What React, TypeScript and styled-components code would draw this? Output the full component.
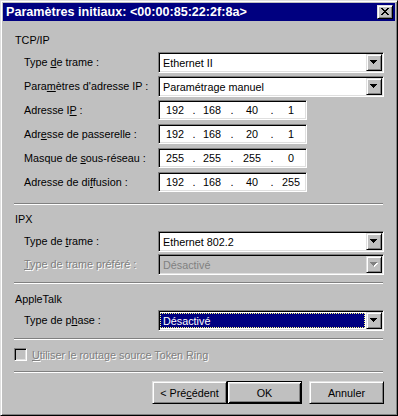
import React from 'react';
import styled, { createGlobalStyle, css } from 'styled-components';

const GlobalStyle = createGlobalStyle`
    html, body {
        margin: 0;
        padding: 0;
        background: #c0c0c0;
    }
    body {
        font-family: "Liberation Sans", Arial, sans-serif;
        font-size: 10.8px;
        color: #000;
    }
`;

const raised = css`
    border: 1px solid;
    border-color: #dfdfdf #000 #000 #dfdfdf;
    box-shadow: inset 1px 1px #fff, inset -1px -1px #808080;
`;

const sunken = css`
    border: 1px solid;
    border-color: #808080 #fff #fff #808080;
    box-shadow: inset 1px 1px #000, inset -1px -1px #dfdfdf;
`;

const Window = styled.div`
    width: 398px;
    height: 416px;
    box-sizing: border-box;
    padding: 2px;
    background: #c0c0c0;
    display: flex;
    flex-direction: column;
    ${raised};
`;

const TitleBar = styled.div`
    height: 18px;
    background: #000080;
    display: flex;
    align-items: center;
    justify-content: space-between;
    padding: 0 2px 0 3px;
`;

const TitleText = styled.span`
    color: #fff;
    font-weight: bold;
    font-size: 12.6px;
    white-space: nowrap;
`;

const CloseButton = styled.div`
    width: 16px;
    height: 14px;
    box-sizing: border-box;
    background: #c0c0c0;
    display: flex;
    align-items: center;
    justify-content: center;
    ${raised};
`;

const Content = styled.div`
    display: flex;
    flex-direction: column;
    padding: 0 11px;
`;

const Heading = styled.div<{ $mt: number; $mb: number }>`
    height: 14px;
    line-height: 14px;
    padding-left: 1px;
    margin-top: ${({ $mt }) => $mt}px;
    margin-bottom: ${({ $mb }) => $mb}px;
`;

const Rows = styled.div`
    display: flex;
    flex-direction: column;
    padding-left: 10px;
`;

const Row = styled.div<{ $pitch: number }>`
    display: flex;
    align-items: flex-start;
    height: ${({ $pitch }) => $pitch}px;
`;

const Label = styled.div<{ $disabled?: boolean }>`
    width: 134px;
    height: 21px;
    line-height: 21px;
    white-space: nowrap;
    ${({ $disabled }) => $disabled && css`
        color: #808080;
        text-shadow: 1px 1px 0 #fff;
    `}
`;

const Combo = styled.div<{ $disabled?: boolean }>`
    width: 226px;
    height: 21px;
    box-sizing: border-box;
    display: flex;
    align-items: stretch;
    padding: 1px;
    background: ${({ $disabled }) => ($disabled ? '#c0c0c0' : '#fff')};
    ${sunken};
`;

const ComboValue = styled.div<{ $focused?: boolean; $disabled?: boolean }>`
    flex: 1;
    margin: 1px 1px 1px 0;
    padding-left: 2px;
    line-height: 15px;
    white-space: nowrap;
    border: 1px solid transparent;
    color: ${({ $disabled }) => ($disabled ? '#808080' : '#000')};
    ${({ $focused }) => $focused && css`
        background: #000080;
        color: #fff;
        border: 1px dotted #ffff80;
    `}
`;

const DropButton = styled.div`
    width: 16px;
    box-sizing: border-box;
    background: #c0c0c0;
    display: flex;
    align-items: center;
    justify-content: center;
    ${raised};
`;

const IpField = styled.div`
    width: 149px;
    height: 20px;
    box-sizing: border-box;
    background: #fff;
    padding: 0 1px;
    display: grid;
    grid-template-columns: 30px 8px 28px 12px 28px 12px 26px;
    align-items: center;
    line-height: 18px;
    text-align: center;
    ${sunken};
`;

const Separator = styled.div<{ $mt: number }>`
    height: 0;
    margin-top: ${({ $mt }) => $mt}px;
    border-top: 1px solid #808080;
    border-bottom: 1px solid #fff;
    margin-right: 1px;
`;

const CheckRow = styled.div`
    display: flex;
    align-items: center;
    gap: 5px;
    margin-top: 8px;
    height: 13px;
`;

const CheckBox = styled.div`
    width: 13px;
    height: 13px;
    box-sizing: border-box;
    background: #c0c0c0;
    ${sunken};
`;

const DisabledText = styled.span`
    color: #808080;
    text-shadow: 1px 1px 0 #fff;
    white-space: nowrap;
`;

const ButtonRow = styled.div`
    display: flex;
    justify-content: flex-end;
    margin-top: 8px;
`;

const Button = styled.div<{ $default?: boolean; $gap?: number }>`
    width: 75px;
    height: 23px;
    box-sizing: border-box;
    display: flex;
    align-items: center;
    justify-content: center;
    background: #c0c0c0;
    margin-left: ${({ $gap }) => $gap ?? 0}px;
    ${({ $default }) => ($default
        ? css`
            border: 1px solid #000;
            box-shadow: inset 1px 1px #fff, inset -1px -1px #000, inset 2px 2px #dfdfdf, inset -2px -2px #808080;
        `
        : raised)}
`;

const Key = styled.span`
    text-decoration: underline;
    text-underline-offset: 1px;
`;

const Bitmap: React.FC<{ rows: string[]; color: string; shadow?: string }> = ({ rows, color, shadow }) => {
    const w = rows[0].length;
    const h = rows.length;
    const cells: React.ReactNode[] = [];
    rows.forEach((r, y) => r.split('').forEach((c, x) => {
        if (c === 'X') {
            if (shadow) cells.push(<rect key={`s${x}-${y}`} x={x + 1} y={y + 1} width={1} height={1} fill={shadow} />);
            cells.push(<rect key={`${x}-${y}`} x={x} y={y} width={1} height={1} fill={color} />);
        }
    }));
    return (
        <svg width={w + 1} height={h + 1} viewBox={`0 0 ${w + 1} ${h + 1}`} shapeRendering="crispEdges">
            {cells}
        </svg>
    );
};

const closeGlyph = [
    'XX....XX',
    '.XX..XX.',
    '..XXXX..',
    '...XX...',
    '..XXXX..',
    '.XX..XX.',
    'XX....XX',
];

const arrowGlyph = [
    'XXXXXXX',
    '.XXXXX.',
    '..XXX..',
    '...X...',
];

const Select: React.FC<{ value: string; disabled?: boolean; focused?: boolean }> = ({ value, disabled, focused }) => (
    <Combo $disabled={disabled}>
        <ComboValue $disabled={disabled} $focused={focused}>{value}</ComboValue>
        <DropButton>
            <Bitmap rows={arrowGlyph} color={disabled ? '#808080' : '#000'} shadow={disabled ? '#fff' : undefined} />
        </DropButton>
    </Combo>
);

const IpAddress: React.FC<{ value: string }> = ({ value }) => {
    const parts = value.split('.');
    return (
        <IpField>
            {parts.map((p, i) => (
                <React.Fragment key={i}>
                    {i > 0 && <span>.</span>}
                    <span>{p}</span>
                </React.Fragment>
            ))}
        </IpField>
    );
};

export default function App() {
    return (
        <>
            <GlobalStyle />
            <Window>
                <TitleBar>
                    <TitleText>Paramètres initiaux: &lt;00:00:85:22:2f:8a&gt;</TitleText>
                    <CloseButton><Bitmap rows={closeGlyph} color="#000" /></CloseButton>
                </TitleBar>
                <Content>
                    <Heading $mt={12} $mb={5}>TCP/IP</Heading>
                    <Rows>
                        <Row $pitch={24}>
                            <Label>Type <Key>d</Key>e trame :</Label>
                            <Select value="Ethernet II" />
                        </Row>
                        <Row $pitch={24}>
                            <Label>Para<Key>m</Key>ètres d'adresse IP :</Label>
                            <Select value="Paramétrage manuel" />
                        </Row>
                        <Row $pitch={24}>
                            <Label>Adresse I<Key>P</Key> :</Label>
                            <IpAddress value="192.168.40.1" />
                        </Row>
                        <Row $pitch={24}>
                            <Label>Adr<Key>e</Key>sse de passerelle :</Label>
                            <IpAddress value="192.168.20.1" />
                        </Row>
                        <Row $pitch={24}>
                            <Label>Masque de <Key>s</Key>ous-réseau :</Label>
                            <IpAddress value="255.255.255.0" />
                        </Row>
                        <Row $pitch={24}>
                            <Label>Adresse de di<Key>f</Key>fusion :</Label>
                            <IpAddress value="192.168.40.255" />
                        </Row>
                    </Rows>
                    <Separator $mt={7} />

                    <Heading $mt={7} $mb={5}>IPX</Heading>
                    <Rows>
                        <Row $pitch={23}>
                            <Label>Type de <Key>t</Key>rame :</Label>
                            <Select value="Ethernet 802.2" />
                        </Row>
                        <Row $pitch={23}>
                            <Label $disabled><Key>T</Key>ype de trame préféré :</Label>
                            <Select value="Désactivé" disabled />
                        </Row>
                    </Rows>
                    <Separator $mt={5} />

                    <Heading $mt={8} $mb={4}>AppleTalk</Heading>
                    <Rows>
                        <Row $pitch={21}>
                            <Label>Type de p<Key>h</Key>ase :</Label>
                            <Select value="Désactivé" focused />
                        </Row>
                    </Rows>
                    <Separator $mt={7} />

                    <CheckRow>
                        <CheckBox />
                        <DisabledText><Key>U</Key>tiliser le routage source Token Ring</DisabledText>
                    </CheckRow>
                    <Separator $mt={10} />

                    <ButtonRow>
                        <Button>&lt; Pré<Key>c</Key>édent</Button>
                        <Button $default>OK</Button>
                        <Button $gap={7}>Annuler</Button>
                    </ButtonRow>
                </Content>
            </Window>
        </>
    );
}
